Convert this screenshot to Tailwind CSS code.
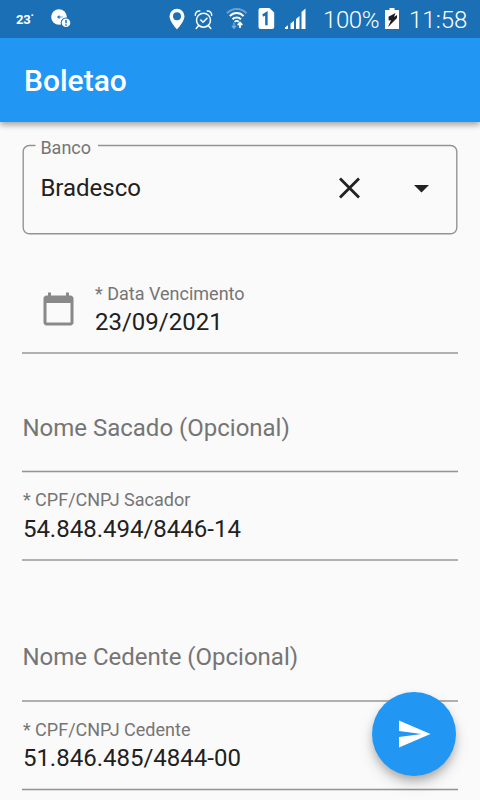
<!DOCTYPE html>
<html lang="pt-BR">
<head>
<meta charset="utf-8">
<title>Boletao</title>
<script src="https://cdn.jsdelivr.net/npm/@tailwindcss/browser@4"></script>
</head>
<body class="w-[480px] h-[800px] overflow-hidden bg-[#fafafa] font-['Roboto',sans-serif] text-[#212121]">
<div class="relative w-full h-full flex flex-col overflow-hidden">
  <div class="h-[38px] shrink-0 bg-[#1b6fb5] text-white flex items-center relative z-10">
    <span class="w-[35px] ml-4 text-[13px] leading-[38px] font-bold whitespace-nowrap pt-px tracking-[-0.2px]">23<span class="relative">˙</span></span>
    <svg class="w-[20px] h-[20px] shrink-0" viewBox="0 0 20 20"><circle cx="8" cy="8" r="7.8" fill="#fff"/><circle cx="8" cy="8" r="1.6" fill="#1b6fb5"/><path d="M8 8h4" stroke="#8fb9dc" stroke-width="1"/><circle cx="15" cy="13.7" r="5.3" fill="#1b6fb5"/><circle cx="15" cy="13.7" r="4.3" fill="#fff"/><path d="M15 11v3.3m0 1v1.4" stroke="#1b6fb5" stroke-width="1.5"/></svg>
    <svg class="w-[16px] h-[22px] ml-[98px] shrink-0" viewBox="0 0 16 22"><path fill="#fff" fill-rule="evenodd" d="M8 .8a7.5 7.5 0 0 0-7.5 7.5C.5 13.500 8 21.500 8 21.500S15.500 13.500 15.500 8.300A7.500 7.500 0 0 0 8 .8zm0 3.500a4 4 0 1 1 0 8 4 4 0 0 1 0-8z"/></svg>
    <svg class="w-[20px] h-[22px] ml-[9px] shrink-0" viewBox="0 -0.7 20 22" fill="none" stroke="#fff" stroke-width="1.500" stroke-linecap="round"><circle cx="9.500" cy="11.500" r="7"/><path d="M6.800 11.300l2.200 2.200 4-4M1.300 6.500a4 4 0 0 1 4.500-4.200M17.700 6.500a4 4 0 0 0-4.500-4.200M4.500 17l-2.300 2.700M14.500 17l2.300 2.700"/></svg>
    <svg class="w-[22px] h-[22px] ml-[12px] shrink-0" viewBox="0 0 22 22" fill="none" stroke="#fff"><path d="M1 5.200c5.300-5.600 14.200-5.600 19.500 0" stroke="#6ba0cf" stroke-width="2"/><path d="M3.800 8.200c3.700-4.200 10.100-4.200 13.800 0M6.500 11.200c2.200-2.400 6.200-2.400 8.400 0" stroke-width="2"/><path d="M8.700 13.800c1-1.200 3-1.200 4 0" stroke-width="1.800"/><path d="M8 14.500v5.500m-2-2.300l2 2.300 2-2.300" stroke="#7caad3" stroke-width="1.500"/><path d="M14 20v-5.500m-2.300 2.600l2.300-2.600 2.300 2.600" stroke-width="1.700"/></svg>
    <svg class="w-[17px] h-[22px] ml-[10px] shrink-0" viewBox="0 0 17 22"><path d="M2.500 0h9L16.200 4.500v14.500a2 2 0 0 1-2 2H2.500a2 2 0 0 1-2-2V2a2 2 0 0 1 2-2z" fill="#fff"/><path d="M4.800 7.600l3.600-2.300v11.900" fill="none" stroke="#1b6fb5" stroke-width="2.500"/></svg>
    <svg class="w-[22px] h-[22px] ml-[10px] shrink-0" viewBox="0 0 22 22" fill="#fff"><path d="M0 21v-1.500l3-2.300V21zM5.500 21v-5.500l3.500-2.700V21zM11 21V11l3.500-3V21zM16.500 21V4L20.500.4V21z"/></svg>
    <span class="ml-[16px] w-[58px] text-[24px] leading-[38px] font-light whitespace-nowrap pt-[2px] tracking-[-0.4px]">100%</span>
    <svg class="w-[14px] h-[22px] ml-[4px] shrink-0" viewBox="0 0 14 22"><path d="M4.500 0h5v2H14v19H0V2h4.500z" fill="#fff"/><path d="M10.500 5L3.500 8.800 3.700 12.500 6 12.200l-3 6.800 9-9V7L9 9z" fill="#1c1c24"/></svg>
    <span class="ml-[10px] text-[24px] leading-[38px] font-light whitespace-nowrap pt-[2px]">11:58</span>
  </div>
  <header class="h-[84px] shrink-0 bg-[#2196f3] px-6 flex items-center shadow-[0_3px_6px_rgba(0,0,0,0.35)]">
    <h1 class="text-[30px] leading-[36px] font-medium text-white pt-px">Boletao</h1>
  </header>
  <main class="px-[22.400px] pt-[15px] flex flex-col">
    <section class="h-[98px] relative shrink-0">
      <svg class="absolute left-[-0.400px] top-0 w-[436px] h-[98px]" viewBox="22 137 436 98" fill="none" stroke="#949494" stroke-width="1.400"><path d="M35.500 145.500H29.200a6 6 0 0 0-6 6V227.700a6 6 0 0 0 6 6H450.800a6 6 0 0 0 6-6V151.500a6 6 0 0 0-6-6H98"/></svg>
      <div class="relative pl-[18px] text-[18px] leading-[22px] text-[#757575]">Banco</div>
      <div class="relative flex items-center pl-[18px] h-[58px]">
        <span class="w-[287.600px] text-[24px] leading-[28px]">Bradesco</span>
        <svg class="w-[42px] h-[36px]" viewBox="0 0 42 36"><path d="M12 8.500l19 19M31 8.500l-19 19" stroke="#212121" stroke-width="2.800"/></svg>
        <svg class="w-[36px] h-[36px] ml-[33px]" viewBox="0 0 36 36"><path d="M11 15h15l-7.500 7.500z" fill="#212121"/></svg>
      </div>
    </section>
    <section class="h-[119px] flex flex-col shrink-0">
      <div class="h-[117px] flex pt-[48px]">
        <svg class="w-[36px] h-[36px] ml-[18.600px] mt-[8px]" viewBox="0.33 0 24 24" fill="#898989"><path d="M20 3h-1V1h-2v2H7V1H5v2H4c-1.100 0-2 .9-2 2v16c0 1.100.9 2 2 2h16c1.100 0 2-.9 2-2V5c0-1.100-.9-2-2-2zm0 18H4V8h16v13z"/></svg>
        <div class="ml-[18px]">
          <div class="text-[18px] leading-[22px] text-[#757575]">* Data Vencimento</div>
          <div class="text-[24px] leading-[28px] mt-[3px]">23/09/2021</div>
        </div>
      </div>
      <div class="h-[2px] bg-[#b0b0b0]"></div>
    </section>
    <section class="h-[119px] shrink-0 flex flex-col">
      <div class="grow pt-[60px] text-[24px] leading-[28px] text-[#757575]">Nome Sacado (Opcional)</div>
      <div class="h-[3px] bg-[#949494] border-y border-[#dedede]"></div>
    </section>
    <section class="h-[88px] shrink-0 flex flex-col">
      <div class="grow pt-[16px] pl-[0.5px]">
        <div class="text-[18px] leading-[22px] text-[#757575]">* CPF/CNPJ Sacador</div>
        <div class="text-[24px] leading-[28px] mt-[4px]">54.848.494/8446-14</div>
      </div>
      <div class="h-[2px] bg-[#b0b0b0]"></div>
    </section>
    <section class="h-[141px] shrink-0 flex flex-col">
      <div class="grow pt-[82px] text-[24px] leading-[28px] text-[#757575]">Nome Cedente (Opcional)</div>
      <div class="h-[2px] bg-[#b0b0b0]"></div>
    </section>
    <section class="h-[89px] shrink-0 flex flex-col">
      <div class="grow pt-[17px] pl-[0.5px]">
        <div class="text-[18px] leading-[22px] text-[#757575]">* CPF/CNPJ Cedente</div>
        <div class="text-[24px] leading-[28px] mt-[3px]">51.846.485/4844-00</div>
      </div>
      <div class="h-[3px] bg-[#949494] border-y border-[#dedede]"></div>
    </section>
  </main>
  <button aria-label="Enviar" class="absolute left-[372px] top-[692px] w-[84px] h-[84px] rounded-full bg-[#2196f3] flex items-center justify-center shadow-[0_5px_8px_-1px_rgba(0,0,0,0.22),0_8px_15px_rgba(0,0,0,0.14)]">
    <svg class="w-[36px] h-[36px]" viewBox="0 0 24 24" fill="#fff"><path d="M2.010 21L23 12 2.010 3 2 10l15 2-15 2z"/></svg>
  </button>
</div>
</body>
</html>
